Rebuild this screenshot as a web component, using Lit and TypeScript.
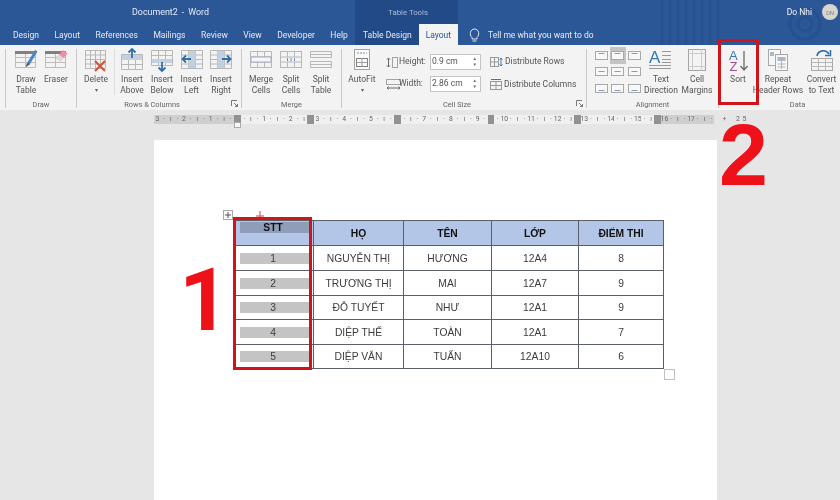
import { LitElement, html, css, svg } from 'lit';
import { customElement } from 'lit/decorators.js';

const grid = (x: number, y: number, w: number, h: number, c: number, r: number, stroke = '#b8b8b8') => {
  const lines = [];
  for (let i = 0; i <= c; i++) {
    const px = x + (w * i) / c;
    lines.push(svg`<line x1=${px} y1=${y} x2=${px} y2=${y + h} stroke=${stroke} />`);
  }
  for (let i = 0; i <= r; i++) {
    const py = y + (h * i) / r;
    lines.push(svg`<line x1=${x} y1=${py} x2=${x + w} y2=${py} stroke=${stroke} />`);
  }
  return lines;
};

const icon = (content: unknown, w = 24, h = 24) =>
  html`<svg width=${w} height=${h} viewBox="0 0 ${w} ${h}" fill="none">${content}</svg>`;

const penTable = (extra: unknown) =>
  icon(svg`
    ${grid(1.5, 4.5, 20, 15, 2, 3, '#bcbcbc')}
    <rect x="1" y="3" width="21" height="3" fill="#808080" />
    ${extra}
  `);

const icons: Record<string, () => unknown> = {
  draw: () =>
    penTable(svg`<path d="M12 19l1-4L21 2l2.5 1.6L16 16z" fill="#4a86c5" /><path d="M12 19l1-4 3 1z" fill="#555" />`),
  eraser: () =>
    penTable(svg`<path d="M12 10l7-8 4.5 3.500-7 8z" fill="#ee8fa0" /><path d="M12 10l3-3.400 4.500 3.500-3 3.400z" fill="#dcdcdc" />`),
  delete: () =>
    icon(svg`
      ${grid(1.5, 2.5, 20, 18, 4, 4)}
      <path d="M11 13l10 10M21 13L11 23" stroke="#d2553a" stroke-width="2.2" />
    `),
  above: () =>
    icon(svg`
      ${grid(1.5, 6.5, 21, 15, 3, 3)}
      <rect x="2" y="7" width="20" height="5" fill="#c3d0e0" />
      <path d="M12 10V1M8.500 4.500L12 1l3.500 3.500" stroke="#2f6fa8" stroke-width="1.8" />
    `),
  below: () =>
    icon(svg`
      ${grid(1.5, 2.5, 21, 15, 3, 3)}
      <rect x="2" y="11" width="20" height="4" fill="#c3d0e0" />
      <path d="M12 14v9M8.500 19.500L12 23l3.500-3.500" stroke="#2f6fa8" stroke-width="1.8" />
    `),
  left: () =>
    icon(svg`
      ${grid(1.5, 2.5, 21, 18, 3, 4)}
      <rect x="8.500" y="3" width="7" height="17" fill="#c3d0e0" />
      <path d="M11 11H2.500M6 7.500L2.500 11 6 14.500" stroke="#2f6fa8" stroke-width="1.8" />
    `),
  right: () =>
    icon(svg`
      ${grid(1.5, 2.5, 21, 18, 3, 4)}
      <rect x="8.500" y="3" width="7" height="17" fill="#c3d0e0" />
      <path d="M13 11h8.500M18 7.500l3.500 3.500-3.500 3.500" stroke="#2f6fa8" stroke-width="1.8" />
    `),
  merge: () =>
    icon(svg`
      ${grid(1.5, 3.5, 21, 16, 3, 3)}
      <rect x="2" y="9" width="20" height="5" fill="#f6f6f6" stroke="#9db0c4" />
    `),
  splitCells: () =>
    icon(svg`
      <rect x="1.500" y="3.500" width="21" height="16" stroke="#b8b8b8" />
      <path d="M1.500 9h21M1.500 14h21M8.500 3.500V9M15.500 3.500V9M8.500 14v5.500M15.500 14v5.500" stroke="#b8b8b8" />
      <path d="M8.500 10v3M12 10v3M15.500 10v3" stroke="#6f93b8" />
    `),
  splitTable: () =>
    icon(svg`
      ${grid(1.5, 3.5, 21, 6, 1, 2)}
      ${grid(1.5, 13.5, 21, 6, 1, 2)}
    `),
  autofit: () =>
    icon(svg`
      <rect x="4.500" y="1.500" width="15" height="20" fill="#fafafa" stroke="#a4a4a4" />
      <path d="M7 5h10" stroke="#6f93b8" stroke-dasharray="2 1" />
      <rect x="6.500" y="10.500" width="11" height="8" stroke="#808080" />
      <path d="M6.500 14.500h11M12 10.500v8" stroke="#a0a0a0" />
    `),
  textDir: () =>
    icon(svg`
      <text x="0" y="15" font-family="Liberation Sans" font-size="17" fill="#3a78b5">A</text>
      <path d="M0 17.500h22M13 3.500h9M13 7.500h9M13 11.500h9M13 14.500h9M0 20.500h22" stroke="#999" />
    `),
  margins: () =>
    icon(svg`
      <rect x="3.500" y="1.500" width="17" height="21" stroke="#a4a4a4" />
      <rect x="7.500" y="5.500" width="9" height="13" stroke="#c0c0c0" />
      <path d="M3.500 5.500h17M3.500 18.500h17M7.500 1.500v21M16.500 1.500v21" stroke="#cccccc" />
    `),
  sort: () =>
    icon(svg`
      <text x="3" y="12" font-family="Liberation Sans" font-size="13" fill="#3a78b5">A</text>
      <text x="3.500" y="23" font-family="Liberation Sans" font-size="13" fill="#a04f96">Z</text>
      <path d="M18 3v19M14.500 18l3.500 4 3.500-4" stroke="#6a6a6a" stroke-width="1.3" />
    `),
  repeat: () =>
    icon(svg`
      <rect x="2.500" y="1.500" width="12" height="16" fill="#f7f7f7" stroke="#a8a8a8" />
      <rect x="9.500" y="6.500" width="12" height="16" fill="#f7f7f7" stroke="#a8a8a8" />
      <rect x="4" y="4" width="4" height="4" fill="#a8b8c8" />
      <rect x="11.500" y="9" width="8" height="4" fill="#a8b8c8" />
      <path d="M11.500 16h8M11.500 19h8M15.500 13v8" stroke="#b4b4b4" />
    `),
  convert: () =>
    icon(svg`
      <rect x="1.500" y="10.500" width="21" height="12" stroke="#a8a8a8" />
      <path d="M1.500 14.500h21M1.500 18.500h21M8.500 10.500v12M15.500 10.500v12" stroke="#b8b8b8" />
      <path d="M7 8c1-6 9-7 12-2" stroke="#2f6fa8" stroke-width="1.6" />
      <path d="M20.500 2v5.500H15" stroke="#2f6fa8" stroke-width="1.5" />
    `),
};

const heightIcon = icon(svg`
  <rect x="6.500" y="0.500" width="5" height="10" stroke="#a4a4a4" />
  <path d="M2.500 1v9M1 2.500L2.500 1 4 2.500M1 8.500L2.500 10 4 8.500" stroke="#666" />
`, 12, 11);

const widthIcon = icon(svg`
  <rect x="0.500" y="0.500" width="14" height="5" stroke="#a4a4a4" />
  <path d="M1 9h13M2.500 7.500L1 9l1.500 1.500M12.500 7.500L14 9l-1.500 1.500" stroke="#666" />
`, 15, 11);

const distRows = icon(svg`
  <rect x="0.500" y="0.500" width="8" height="9" stroke="#999" />
  <path d="M0.500 5h8M4.500 0.500v9" stroke="#999" />
  <path d="M11 1v8M9.500 2.500L11 1l1.500 1.500M9.500 7.500L11 9l1.500-1.500" stroke="#3a78b5" />
`, 13, 10);

const distCols = icon(svg`
  <rect x="0.500" y="2.500" width="11" height="8" stroke="#999" />
  <path d="M0.500 6.500h11M6 2.500v8" stroke="#999" />
  <path d="M1 0.500h10" stroke="#3a78b5" />
`, 12, 11);

const launcher = icon(svg`
  <path d="M0.500 6V0.500H6M3 3l3.500 3.500M4 6.500h2.500V4" stroke="#777" />
`, 7, 7);

const alignIcon = (y: number) =>
  icon(svg`
    <rect x="0.500" y="0.500" width="12" height="8" fill="#f8f8f8" stroke="#a8a8a8" />
    <path d="M3.500 ${y}h6" stroke="#7f9cbb" />
  `, 13, 9);

type Btn = { lines: string[]; icon: string; w: number; caret?: boolean };

const draw: Btn[] = [
  { lines: ['Draw', 'Table'], icon: 'draw', w: 30 },
  { lines: ['Eraser'], icon: 'eraser', w: 30 },
];
const insert: Btn[] = [
  { lines: ['Insert', 'Above'], icon: 'above', w: 30 },
  { lines: ['Insert', 'Below'], icon: 'below', w: 30 },
  { lines: ['Insert', 'Left'], icon: 'left', w: 29 },
  { lines: ['Insert', 'Right'], icon: 'right', w: 30 },
];
const merge: Btn[] = [
  { lines: ['Merge', 'Cells'], icon: 'merge', w: 30 },
  { lines: ['Split', 'Cells'], icon: 'splitCells', w: 30 },
  { lines: ['Split', 'Table'], icon: 'splitTable', w: 30 },
];
const data: Btn[] = [
  { lines: ['Sort'], icon: 'sort', w: 30 },
  { lines: ['Repeat', 'Header Rows'], icon: 'repeat', w: 50 },
  { lines: ['Convert', 'to Text'], icon: 'convert', w: 37 },
];

const rows = [
  ['1', 'NGUYỄN THỊ', 'HƯƠNG', '12A4', '8'],
  ['2', 'TRƯƠNG THỊ', 'MAI', '12A7', '9'],
  ['3', 'ĐỖ TUYẾT', 'NHƯ', '12A1', '9'],
  ['4', 'DIỆP THẾ', 'TOÀN', '12A1', '7'],
  ['5', 'DIỆP VĂN', 'TUẤN', '12A10', '6'],
];
const rowHeights = [25, 25, 24, 25, 24];

const rulerBlocks = [12, 23, 36, 50, 63, 75];

@customElement('app-root')
export class AppRoot extends LitElement {
  static styles = css`
    :host {
      display: block;
      position: relative;
      width: 840px;
      height: 500px;
      overflow: hidden;
      background: #e6e6e6;
      font-family: Roboto, 'Liberation Sans', sans-serif;
      color: #444;
      filter: blur(0.3px);
    }
    svg {
      display: block;
      overflow: visible;
    }

    header {
      position: relative;
      display: flex;
      height: 45px;
      background: #2b5797;
      color: #e4ebf5;
      font-size: 8.5px;
      white-space: nowrap;
    }
    .pattern {
      position: absolute;
      left: 640px;
      top: 0;
    }
    .col {
      position: relative;
      display: flex;
      flex-direction: column;
    }
    .top {
      height: 24px;
      display: flex;
      align-items: center;
    }
    .tabs {
      height: 21px;
      display: flex;
      align-items: center;
    }
    .main {
      width: 355px;
    }
    .main .top {
      padding-left: 132px;
      font-size: 8.9px;
      gap: 4px;
    }
    .main .tabs {
      padding-left: 13px;
      gap: 15.5px;
    }
    .tools {
      width: 103px;
      background: #224a86;
    }
    .tools .top {
      justify-content: flex-end;
      padding-right: 30px;
      font-size: 7.8px;
      color: #a9bcd8;
    }
    .tools .tabs {
      padding-left: 8px;
      gap: 15px;
      align-items: stretch;
    }
    .tools .tabs span {
      display: flex;
      align-items: center;
    }
    .tools .tabs .active {
      background: #f3f3f3;
      color: #2b5797;
      width: 41px;
      margin-left: -8px;
      justify-content: center;
    }
    .rest {
      flex: 1;
    }
    .rest .top {
      justify-content: flex-end;
      padding-right: 2px;
      gap: 10px;
      color: #f0f4fa;
    }
    .avatar {
      width: 16px;
      height: 16px;
      border-radius: 50%;
      background: #d9d4cc;
      color: #7d8a94;
      font-size: 6px;
      display: flex;
      align-items: center;
      justify-content: center;
    }
    .rest .tabs {
      padding-left: 10px;
      gap: 7px;
    }

    .ribbon {
      display: flex;
      height: 65px;
      background: #f3f3f3;
      font-size: 8.5px;
      line-height: 11.4px;
      color: #555;
    }
    .sep {
      width: 1px;
      margin: 4px 0 2px;
      background: #c9c9c9;
      flex: none;
    }
    .group {
      display: flex;
      flex-direction: column;
      flex: none;
      position: relative;
    }
    .items {
      flex: 1;
      min-height: 0;
      display: flex;
      padding-top: 3px;
    }
    .glabel {
      height: 11px;
      line-height: 11px;
      font-size: 7.4px;
      text-align: center;
      color: #666;
    }
    .launch {
      position: absolute;
      right: 3px;
      bottom: 3px;
    }
    .btn {
      flex: none;
      display: flex;
      flex-direction: column;
      align-items: center;
      white-space: nowrap;
    }
    .btn .ic {
      height: 26px;
    }
    .caret {
      font-size: 6px;
      line-height: 9px;
      color: #666;
    }
    .inner-sep {
      width: 1px;
      height: 46px;
      margin: 1px 2px 0 3px;
      background: #dedede;
    }
    .sizes {
      display: flex;
      flex-direction: column;
      gap: 6px;
      padding: 6px 0 0 9px;
      width: 104px;
      box-sizing: border-box;
    }
    .size {
      display: flex;
      align-items: center;
      gap: 0;
      height: 16px;
    }
    .size label {
      width: 29px;
    }
    .size .ic {
      width: 13px;
      flex: none;
    }
    .spin {
      display: flex;
      align-items: center;
      justify-content: space-between;
      width: 51px;
      height: 16px;
      box-sizing: border-box;
      border: 1px solid #c4c4c4;
      background: #fff;
      padding: 0 3px 0 1px;
      margin-left: auto;
    }
    .arrows {
      font-size: 4.5px;
      line-height: 6px;
      color: #666;
    }
    .dist {
      display: flex;
      flex-direction: column;
      gap: 12px;
      padding: 8px 0 0 9px;
      white-space: nowrap;
    }
    .dist div {
      display: flex;
      align-items: center;
      gap: 2px;
      height: 11px;
    }
    .aligns {
      display: grid;
      grid-template-columns: repeat(3, 16.5px);
      grid-auto-rows: 16.5px;
      padding: 0 0 0 6px;
      margin-top: -1px;
      width: 50px;
    }
    .aligns div {
      display: flex;
      align-items: center;
      justify-content: center;
    }
    .aligns .on {
      background: #c4c4c4;
    }

    .ruler {
      display: flex;
      position: relative;
      height: 9px;
      margin: 5px 0 0 154px;
      width: 574px;
      font-size: 6.8px;
      line-height: 9px;
      color: #666;
    }
    .tick {
      flex: none;
      width: 6.675px;
      display: flex;
      justify-content: center;
      background: #f0f0f0;
      white-space: nowrap;
    }
    .tick.off {
      background: #cfcfcf;
    }
    .tick.block {
      background: #929292;
    }
    .tick.end {
      background: none;
    }
    .tab-mark {
      position: absolute;
      left: 80px;
      top: 7px;
      width: 7px;
      height: 6px;
      background: #f8f8f8;
      border: 1px solid #aaa;
      box-sizing: border-box;
    }

    .desk {
      padding: 16px 0 0 154px;
    }
    .page {
      width: 563px;
      height: 360px;
      padding: 80px 0 0 79px;
      box-sizing: border-box;
      background: #fff;
    }
    .table-wrap {
      position: relative;
      width: 431px;
    }
    table {
      border-collapse: collapse;
      table-layout: fixed;
      width: 431px;
      font-family: 'Liberation Sans', Arial, sans-serif;
      font-size: 10.3px;
      color: #3c3c3c;
      text-align: center;
    }
    th,
    td {
      border: 1px solid #5a5f68;
      padding: 0;
      box-sizing: border-box;
    }
    th {
      background: #b4c6e7;
      color: #111;
      height: 25px;
    }
    th.stt {
      vertical-align: top;
      padding-top: 1px;
    }
    .mark {
      display: block;
      height: 11px;
      line-height: 11px;
      margin: 0 3px 0 6px;
      padding-right: 4px;
      background: #c4c4c4;
    }
    th .mark {
      background: #8f9db9;
    }
    .move {
      position: absolute;
      left: -10px;
      top: -10px;
      width: 10px;
      height: 10px;
      box-sizing: border-box;
      border: 1px solid #a8a8a8;
      background: #fafafa;
    }
    .resize {
      position: absolute;
      right: -11px;
      bottom: -11px;
      width: 11px;
      height: 11px;
      box-sizing: border-box;
      border: 1px solid #c0c0c0;
      background: #fff;
    }
    .spark {
      position: absolute;
      left: 22px;
      top: -9px;
    }

    .red-box {
      position: absolute;
      box-sizing: border-box;
      border: 3.5px solid #d0141c;
    }
    .box-1 {
      left: 233px;
      top: 217px;
      width: 79px;
      height: 153px;
    }
    .box-2 {
      left: 718px;
      top: 39px;
      width: 41px;
      height: 66px;
    }
    .num {
      position: absolute;
      font-weight: 700;
      font-size: 88px;
      line-height: 66px;
      color: #ee1119;
    }
    .num-1 {
      left: 179px;
      top: 267px;
      font-family: Roboto, 'Liberation Sans', sans-serif;
    }
    .num-2 {
      left: 719px;
      top: 122px;
      font-family: 'Liberation Sans', Arial, sans-serif;
    }
  `;

  private renderBtn(b: Btn) {
    return html`
      <div class="btn" style="width:${b.w}px">
        <div class="ic">${icons[b.icon]()}</div>
        ${b.lines.map(l => html`<span>${l}</span>`)}
        ${b.caret ? html`<span class="caret">▾</span>` : ''}
      </div>
    `;
  }

  private renderRuler() {
    const ticks = [];
    for (let k = 0; k <= 83; k++) {
      const n = k / 4 - 3;
      const x = 158 + k * 6.675;
      const label = k % 4 === 0 ? String(Math.abs(n)) : k % 4 === 2 ? 'ı' : '·';
      const off = x < 236 || x > 660;
      const block = rulerBlocks.includes(k);
      ticks.push(html`<span class="tick ${block ? 'block' : off ? 'off' : ''}">${block ? '' : label}</span>`);
    }
    return html`
      <div class="ruler">
        ${ticks}
        <span class="tick end"></span>
        <span class="tick end">+</span>
        <span class="tick end"></span>
        <span class="tick end">2</span>
        <span class="tick end">5</span>
        <div class="tab-mark"></div>
      </div>
    `;
  }

  render() {
    const aligns = [2.5, 4.5, 6.5];
    return html`
      <header>
        <svg class="pattern" width="200" height="45" fill="none" stroke="#1c447e" stroke-opacity="0.35">
          <path d="M22 0v45M30 0v45M38 0v45M46 0v45M54 0v45M62 0v45M70 0v45M78 0v45" stroke-width="3" />
          <circle cx="165" cy="24" r="7" stroke-width="3" />
          <circle cx="165" cy="24" r="15" stroke-width="3" />
        </svg>
        <div class="col main">
          <div class="top"><span>Document2</span><span>-</span><span>Word</span></div>
          <div class="tabs">
            ${['Design', 'Layout', 'References', 'Mailings', 'Review', 'View', 'Developer', 'Help'].map(
              t => html`<span>${t}</span>`
            )}
          </div>
        </div>
        <div class="col tools">
          <div class="top">Table Tools</div>
          <div class="tabs"><span>Table Design</span><span class="active">Layout</span></div>
        </div>
        <div class="col rest">
          <div class="top"><span>Do Nhi</span><div class="avatar">DN</div></div>
          <div class="tabs">
            ${icon(svg`
              <path d="M4 9.500C1 7 2 1 6.500 1s5.500 6 2.500 8.500V11H4z" stroke="#e4ebf5" />
              <path d="M4.500 13h4" stroke="#e4ebf5" />
            `, 13, 14)}
            <span>Tell me what you want to do</span>
          </div>
        </div>
      </header>

      <div class="ribbon">
        <div class="group" style="width:5px"></div>
        <div class="sep"></div>
        <div class="group" style="width:70px">
          <div class="items" style="padding-left:5px">${draw.map(b => this.renderBtn(b))}</div>
          <div class="glabel">Draw</div>
        </div>
        <div class="sep"></div>
        <div class="group" style="width:164px">
          <div class="items" style="padding-left:4px">
            ${this.renderBtn({ lines: ['Delete'], icon: 'delete', w: 30, caret: true })}
            <div class="inner-sep"></div>
            ${insert.map(b => this.renderBtn(b))}
          </div>
          <div class="glabel" style="padding-right:14px">Rows &amp; Columns</div>
          <div class="launch">${launcher}</div>
        </div>
        <div class="sep"></div>
        <div class="group" style="width:99px">
          <div class="items" style="padding-left:4px">${merge.map(b => this.renderBtn(b))}</div>
          <div class="glabel">Merge</div>
        </div>
        <div class="sep"></div>
        <div class="group" style="width:244px">
          <div class="items" style="padding-left:5px">
            ${this.renderBtn({ lines: ['AutoFit'], icon: 'autofit', w: 30, caret: true })}
            <div class="sizes">
              <div class="size">
                <div class="ic">${heightIcon}</div><label>Height:</label>
                <div class="spin"><span>0.9 cm</span><span class="arrows">▲<br />▼</span></div>
              </div>
              <div class="size">
                <div class="ic">${widthIcon}</div><label>Width:</label>
                <div class="spin"><span>2.86 cm</span><span class="arrows">▲<br />▼</span></div>
              </div>
            </div>
            <div class="dist">
              <div>${distRows}<span>Distribute Rows</span></div>
              <div>${distCols}<span>Distribute Columns</span></div>
            </div>
          </div>
          <div class="glabel" style="padding-right:14px">Cell Size</div>
          <div class="launch">${launcher}</div>
        </div>
        <div class="sep"></div>
        <div class="group" style="width:131px">
          <div class="items">
            <div class="aligns">
              ${[0, 1, 2].map(r =>
                [0, 1, 2].map(
                  c => html`<div class=${r === 0 && c === 1 ? 'on' : ''}>${alignIcon(aligns[r])}</div>`
                )
              )}
            </div>
            ${this.renderBtn({ lines: ['Text', 'Direction'], icon: 'textDir', w: 36 })}
            ${this.renderBtn({ lines: ['Cell', 'Margins'], icon: 'margins', w: 36 })}
          </div>
          <div class="glabel">Alignment</div>
        </div>
        <div class="sep"></div>
        <div class="group" style="width:121px">
          <div class="items" style="padding-left:4px">${data.map(b => this.renderBtn(b))}</div>
          <div class="glabel" style="padding-left:36px">Data</div>
        </div>
      </div>

      ${this.renderRuler()}

      <div class="desk">
        <div class="page">
          <div class="table-wrap">
            <table>
              <colgroup>
                <col style="width:80px" /><col style="width:90px" /><col style="width:88px" /><col style="width:87px" /><col style="width:85px" />
              </colgroup>
              <tr>
                <th class="stt"><span class="mark">STT</span></th>
                <th>HỌ</th>
                <th>TÊN</th>
                <th>LỚP</th>
                <th>ĐIỂM THI</th>
              </tr>
              ${rows.map(
                (r, i) => html`
                  <tr style="height:${rowHeights[i]}px">
                    <td><span class="mark">${r[0]}</span></td>
                    ${r.slice(1).map(c => html`<td>${c}</td>`)}
                  </tr>
                `
              )}
            </table>
            <div class="move">
              ${icon(svg`<path d="M4 1v6M1 4h6" stroke="#555" />`, 8, 8)}
            </div>
            <div class="resize"></div>
            <div class="spark">
              ${icon(svg`<path d="M5 0v9M1 5h8" stroke="#e0433a" />`, 10, 9)}
            </div>
          </div>
        </div>
      </div>

      <div class="red-box box-1"></div>
      <div class="red-box box-2"></div>
      <div class="num num-1">1</div>
      <div class="num num-2">2</div>
    `;
  }
}
